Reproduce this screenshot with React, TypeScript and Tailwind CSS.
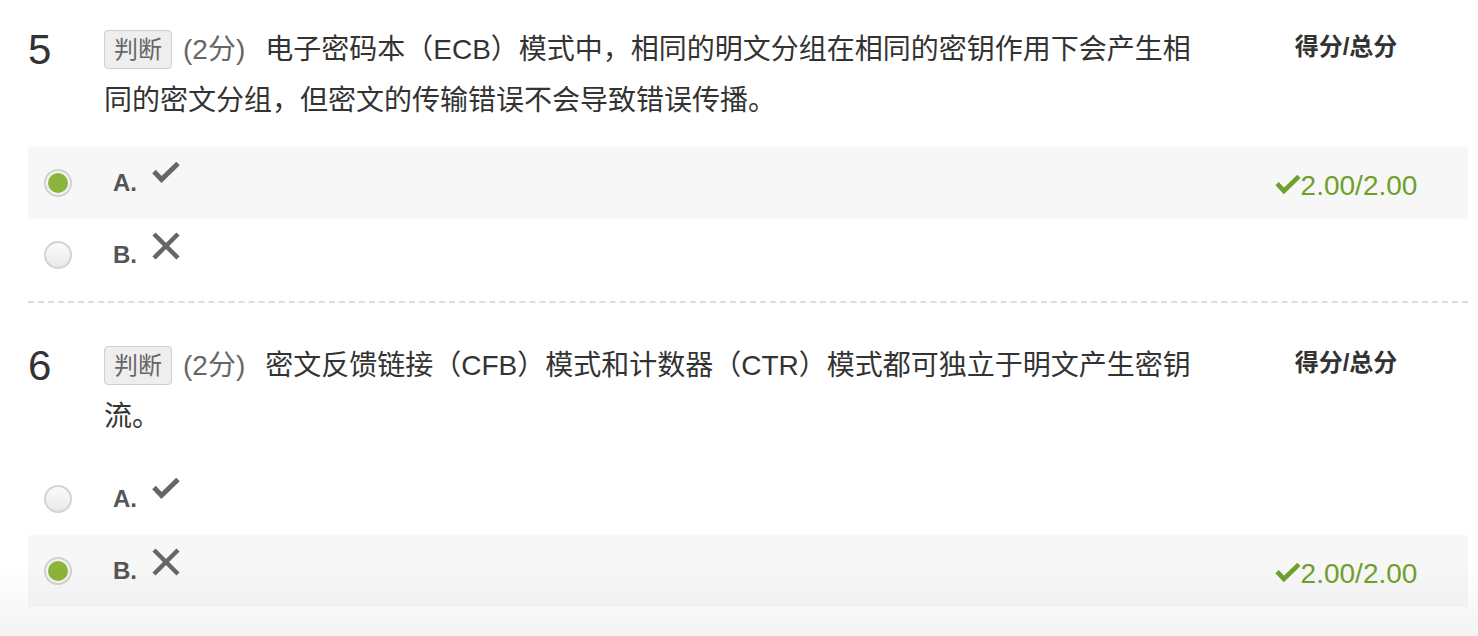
import React from "react";

type Option = { label: string; mark: "check" | "cross"; selected: boolean };

type Question = {
  no: number;
  text: string;
  options: Option[];
};

const questions: Question[] = [
  {
    no: 5,
    text: "电子密码本（ECB）模式中，相同的明文分组在相同的密钥作用下会产生相同的密文分组，但密文的传输错误不会导致错误传播。",
    options: [
      { label: "A.", mark: "check", selected: true },
      { label: "B.", mark: "cross", selected: false },
    ],
  },
  {
    no: 6,
    text: "密文反馈链接（CFB）模式和计数器（CTR）模式都可独立于明文产生密钥流。",
    options: [
      { label: "A.", mark: "check", selected: false },
      { label: "B.", mark: "cross", selected: true },
    ],
  },
];

function CheckMark({ color = "#666", className = "" }: { color?: string; className?: string }) {
  return (
    <svg width="28" height="22" viewBox="0 0 28 22" className={className}>
      <polyline points="2,9.5 9.5,17.5 26,1.5" fill="none" stroke={color} strokeWidth="5" />
    </svg>
  );
}

function CrossMark({ className = "" }: { className?: string }) {
  return (
    <svg width="28" height="28" viewBox="0 0 28 28" className={className}>
      <line x1="2" y1="2" x2="26" y2="26" stroke="#666" strokeWidth="4.5" />
      <line x1="26" y1="2" x2="2" y2="26" stroke="#666" strokeWidth="4.5" />
    </svg>
  );
}

function Radio({ selected }: { selected: boolean }) {
  if (selected) {
    return (
      <div className="w-[28px] h-[28px] rounded-full border-2 border-[#d2d2d2] bg-[#f4f4f4] flex items-center justify-center">
        <div className="w-[20px] h-[20px] rounded-full bg-[#8cb43a]" />
      </div>
    );
  }
  return (
    <div className="w-[28px] h-[28px] rounded-full border-2 border-[#d4d4d4] bg-linear-to-b from-[#fbfbfb] to-[#e9e9e9]" />
  );
}

function QuestionBlock({ q, first }: { q: Question; first: boolean }) {
  return (
    <div
      className={
        first
          ? "pt-[24px] pb-[10px] border-b-2 border-dashed border-[#dddddd]"
          : "pt-[37px]"
      }
    >
      <div className="flex items-start">
        <div className="w-[76px] text-[42px] leading-[51px] text-[#333]">{q.no}</div>
        <div className="w-[1100px] text-[28px] leading-[51px] text-[#333]">
          <div className="float-left h-[51px] flex items-center mr-[20px]">
            <span className="h-[39px] px-[9px] border border-[#cfcfcf] bg-[#eeeeee] rounded-[4px] text-[24px] leading-[37px] text-[#666]">
              判断
            </span>
            <span className="ml-[11px] text-[#666]">(2分)</span>
          </div>
          {q.text}
        </div>
        <div className="ml-auto mr-[22px] w-[200px] text-center text-[24px] font-bold leading-[46px] text-[#333]">
          得分/总分
        </div>
      </div>
      <div className="mt-[21px]">
        {q.options.map((o) => (
          <div
            key={o.label}
            className={`flex items-center h-[72px] pl-[16px] ${o.selected ? "bg-[#f7f7f7]" : ""}`}
          >
            <Radio selected={o.selected} />
            <span className="ml-[41px] text-[24px] font-bold text-[#555]">{o.label}</span>
            {o.mark === "check" ? (
              <CheckMark className="ml-[15px] self-start mt-[15px]" />
            ) : (
              <CrossMark className="ml-[15px] self-start mt-[13px]" />
            )}
            {o.selected && (
              <div className="ml-auto mr-[22px] mt-[6px] w-[200px] flex items-center justify-center text-[28px] text-[#6fa02c]">
                <CheckMark color="#6fa02c" className="w-[26px] h-[20px] mt-[-2px]" />
                <span>2.00/2.00</span>
              </div>
            )}
          </div>
        ))}
      </div>
    </div>
  );
}

export default function App() {
  return (
    <div
      className="min-h-[636px] bg-white pl-[28px] pr-[10px]"
      style={{ fontFamily: '"Liberation Sans", "Noto Sans CJK SC", sans-serif' }}
    >
      {questions.map((q, i) => (
        <QuestionBlock key={q.no} q={q} first={i === 0} />
      ))}
      <div className="fixed inset-x-0 bottom-0 h-[70px] pointer-events-none bg-linear-to-b from-transparent to-black/[0.045]" />
    </div>
  );
}
